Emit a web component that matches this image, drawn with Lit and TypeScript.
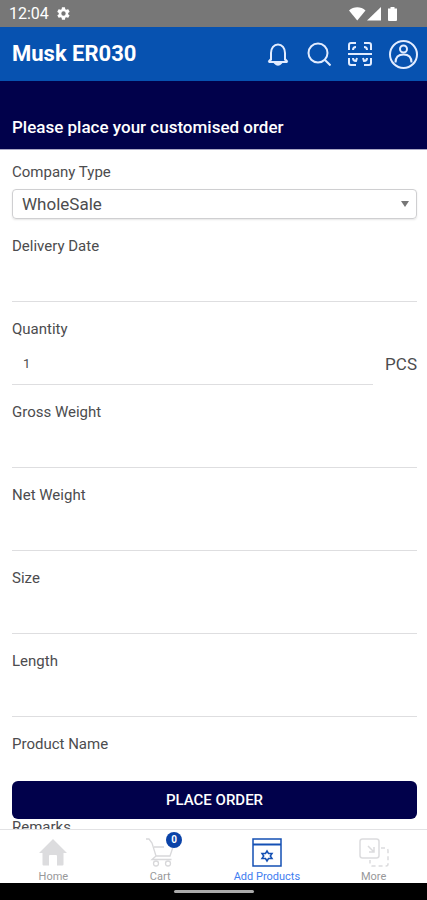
import { LitElement, html, css, svg, nothing } from "lit";
import { customElement, state } from "lit/decorators.js";
import { classMap } from "lit/directives/class-map.js";

interface Field {
  id: string;
  label: string;
  value?: string;
  unit?: string;
}

const FIELDS: Field[] = [
  { id: "delivery", label: "Delivery Date" },
  { id: "quantity", label: "Quantity", value: "1", unit: "PCS" },
  { id: "gross", label: "Gross Weight" },
  { id: "net", label: "Net Weight" },
  { id: "size", label: "Size" },
  { id: "length", label: "Length" },
  { id: "product", label: "Product Name" },
  { id: "remarks", label: "Remarks" },
];

const gear = html`<svg class="gear" viewBox="0 0 24 24" aria-hidden="true">
  <path fill="currentColor" fill-rule="evenodd" d="M19.4 13a7.800 7.800 0 0 0 0-2l2.100-1.600a.5.5 0 0 0 .1-.6l-2-3.500a.5.5 0 0 0-.6-.2l-2.500 1a7.300 7.300 0 0 0-1.700-1L14.400 2.400a.5.5 0 0 0-.5-.4h-4a.5.5 0 0 0-.5.4L9 5.100a7.700 7.700 0 0 0-1.700 1l-2.500-1a.5.5 0 0 0-.6.2l-2 3.500a.5.5 0 0 0 .1.600L4.500 11a7.800 7.800 0 0 0 0 2l-2.200 1.600a.5.5 0 0 0-.1.600l2 3.500c.1.2.4.3.6.2l2.500-1a7.300 7.300 0 0 0 1.700 1l.4 2.700c0 .2.2.4.5.4h4c.3 0 .5-.2.5-.4l.4-2.700a7.700 7.700 0 0 0 1.700-1l2.500 1c.2.1.5 0 .6-.2l2-3.500a.5.5 0 0 0-.1-.6zM12 15.500a3.500 3.500 0 1 1 0-7 3.500 3.500 0 0 1 0 7z"/>
</svg>`;

const signals = html`<svg class="signals" viewBox="0 0 50 16" aria-hidden="true">
  <g fill="currentColor">
    <path d="M0 4.500C4.500.2 12 .2 16.500 4.500L8.250 14.500z"/>
    <path d="M32 1v13.500H18z"/>
    <path d="M39 2.500h2.500V1h4v1.500H48V14q0 1-1 1h-7q-1 0-1-1z"/>
  </g>
</svg>`;

const bell = svg`<path d="M2.500 20h19M5 18.500V11C5 6 8 2.500 12 2.500s7 3.500 7 8.500v7.500M2.500 20L5 17M21.500 20L19 17"/><path d="M9 21q3 3.500 6 0z" fill="currentColor"/>`;
const search = svg`<circle cx="11" cy="11" r="9.500"/><path d="M18 18l5.500 5.500"/>`;
const scan = svg`<path d="M1 8V3q0-2 2-2h5M16 1h5q2 0 2 2v5M1 16v5q0 2 2 2h5M16 23h5q2 0 2-2v-5"/><path d="M5 8q0-3 3-3M16 5q3 0 3 3M5 16q0 3 3 3l1-3M19 16q0 3-3 3l-1-3"/><path d="M0 12h24"/>`;

const ACTIONS = [
  { name: "Notifications", art: bell },
  { name: "Search", art: search },
  { name: "Scan", art: scan },
];

const TABS = [
  {
    name: "Home",
    art: svg`<path d="M15 1L1 15h3.500v11.500q0 1 1 1H11V18q0-1 1-1h6q1 0 1 1v9.500h5.500q1 0 1-1V15H29z" fill="#dcdcde"/>`,
  },
  {
    name: "Cart",
    art: svg`<g fill="none" stroke="#d8d8da" stroke-width="1.300"><path d="M1 1h3l3 4 4 13h14l3-9M11 18l-4 3.500h19.500M9 9h10"/><circle cx="11" cy="25.500" r="2.500"/><circle cx="23" cy="25.500" r="2.500"/></g>`,
    badge: "0",
  },
  {
    name: "Add Products",
    art: svg`<g fill="none" stroke="#1450b4" stroke-width="1.500"><path d="M1 1h28v27H1z"/><path d="M1 6.500h28" stroke-width="2"/><path d="M15 13l1.500 2.500h3.500l-1.700 2.500 1.700 2.500h-3.500L15 23l-1.500-2.500H10l1.700-2.500-1.700-2.500h3.500z"/></g>`,
  },
  {
    name: "More",
    art: svg`<g fill="none" stroke="#dcdcde" stroke-width="1.500"><rect x="1" y="1" width="19" height="19" rx="2.500"/><path d="M9 8l6 6M15 9v5h-5"/><path d="M22 10h4q3 0 3 3v13q0 2-2 2H13q-2 0-2-2v-4" stroke-dasharray="4 3"/></g>`,
  },
];

@customElement("app-root")
export class AppRoot extends LitElement {
  @state() private active = "Add Products";

  static styles = css`
    :host {
      display: flex;
      flex-direction: column;
      height: 100vh;
      background: #fff;
      color: #4c4c4e;
      font-family: Roboto, "Liberation Sans", sans-serif;
      font-size: 15px;
      line-height: 20px;
    }
    * {
      box-sizing: border-box;
    }
    button,
    input,
    select {
      font: inherit;
      color: inherit;
      margin: 0;
      padding: 0;
      border: 0;
      background: none;
      border-radius: 0;
      outline: none;
    }
    svg {
      display: block;
    }
    .status {
      display: flex;
      align-items: center;
      gap: 7px;
      flex: none;
      height: 27px;
      padding: 0 28px 0 9px;
      background: #777;
      color: #fff;
      font-size: 16px;
    }
    .gear {
      width: 15px;
      height: 15px;
    }
    .signals {
      width: 50px;
      height: 16px;
      margin-left: auto;
    }
    .appbar {
      display: flex;
      align-items: center;
      justify-content: space-between;
      flex: none;
      height: 54px;
      padding: 0 9px 0 12px;
      background: #0752b0;
      color: #fff;
    }
    .title {
      margin: 0;
      font-size: 22px;
      line-height: 28px;
      font-weight: 700;
    }
    .actions {
      display: flex;
      align-items: center;
      gap: 17px;
    }
    .action {
      color: #e2ecff;
    }
    .action svg {
      width: 24px;
      height: 24px;
      fill: none;
      stroke: currentColor;
      stroke-width: 2;
    }
    .action .profile {
      width: 29px;
      height: 29px;
    }
    .banner {
      display: flex;
      align-items: flex-end;
      flex: none;
      height: 69px;
      padding: 0 12px 10px;
      background: #01014b;
      color: #fff;
      border-bottom: 1px solid #a9a7c4;
      font-size: 17px;
      font-weight: 500;
      line-height: 24px;
    }
    .heading {
      margin: 0;
      font: inherit;
    }
    .content {
      position: relative;
      flex: 1;
      min-height: 0;
      overflow: hidden;
    }
    .form {
      display: flex;
      flex-direction: column;
      gap: 17px;
      height: 100%;
      overflow: hidden;
      padding: 12px 10px 0 12px;
    }
    .field {
      display: flex;
      flex-direction: column;
      flex: none;
    }
    .pick {
      position: relative;
      margin-top: 7px;
    }
    .select {
      display: block;
      appearance: none;
      width: 100%;
      height: 30px;
      padding: 0 28px 0 9px;
      border: 1px solid #cfcfd1;
      border-radius: 4px;
      box-shadow: 0 1px 2px #0000001a;
      font-size: 17px;
    }
    .caret {
      position: absolute;
      right: 8px;
      top: 12px;
      border: 4px solid transparent;
      border-top: 6px solid #777;
      border-bottom: 0;
      pointer-events: none;
    }
    .entry {
      display: flex;
      align-items: center;
      gap: 12px;
      height: 46px;
    }
    .input {
      flex: 1;
      min-width: 0;
      height: 46px;
      padding: 4px 11px 0;
      border-bottom: 1px solid #dedee0;
      font-size: 13px;
    }
    .unit {
      padding-top: 4px;
      font-size: 17px;
    }
    .submit {
      position: absolute;
      left: 12px;
      right: 10px;
      bottom: 10px;
      height: 38px;
      border-radius: 6px;
      background: #01014b;
      color: #fff;
      font-size: 15px;
      font-weight: 500;
      text-align: center;
    }
    .tabs {
      display: flex;
      flex: none;
      height: 54px;
      border-top: 1px solid #e2e2e4;
    }
    .tab {
      display: flex;
      flex: 1;
      flex-direction: column;
      align-items: center;
      gap: 3px;
      padding-top: 8px;
      color: #98989a;
      font-size: 11px;
      line-height: 14px;
      white-space: nowrap;
    }
    .tab.on {
      color: #3f7df0;
    }
    .glyph {
      position: relative;
    }
    .glyph svg {
      width: 30px;
      height: 29px;
    }
    .badge {
      position: absolute;
      top: -6px;
      right: -7px;
      width: 16px;
      height: 16px;
      border-radius: 50%;
      background: #0b43a8;
      color: #fff;
      font-size: 10px;
      line-height: 16px;
      font-weight: 700;
    }
    .system {
      display: flex;
      align-items: center;
      justify-content: center;
      flex: none;
      height: 17px;
      background: #000;
    }
    .handle {
      width: 80px;
      height: 3px;
      border-radius: 2px;
      background: #aaa;
    }
  `;

  private field(f: Field) {
    return html`<div class="field">
      <label for=${f.id}>${f.label}</label>
      <div class="entry">
        <input class="input" id=${f.id} type="text" .value=${f.value ?? ""} />
        ${f.unit ? html`<span class="unit">${f.unit}</span>` : nothing}
      </div>
    </div>`;
  }

  render() {
    return html`
      <div class="status"><span>12:04</span>${gear}${signals}</div>
      <header class="appbar">
        <h1 class="title">Musk ER030</h1>
        <div class="actions">
          ${ACTIONS.map(
            (a) => html`<button class="action" type="button" aria-label=${a.name}>
              <svg viewBox="0 0 24 24">${a.art}</svg>
            </button>`
          )}
          <button class="action" type="button" aria-label="Profile">
            <svg class="profile" viewBox="0 0 29 29">
              <circle cx="14.500" cy="14.500" r="13.500" />
              <circle cx="14.500" cy="9" r="3.500" />
              <path d="M6.500 22.500c0-5.500 3-8 8-8s8 2.500 8 8" />
            </svg>
          </button>
        </div>
      </header>
      <div class="banner"><h2 class="heading">Please place your customised order</h2></div>
      <main class="content">
        <form class="form" id="order">
          <div class="field">
            <label for="company">Company Type</label>
            <div class="pick">
              <select class="select" id="company">
                <option>WholeSale</option>
              </select>
              <span class="caret"></span>
            </div>
          </div>
          ${FIELDS.map((f) => this.field(f))}
        </form>
        <button class="submit" type="button">PLACE ORDER</button>
      </main>
      <nav class="tabs">
        ${TABS.map(
          (t) => html`<button
            type="button"
            class=${classMap({ tab: true, on: t.name === this.active })}
            @click=${() => (this.active = t.name)}
          >
            <span class="glyph">
              <svg viewBox="0 0 30 29" aria-hidden="true">${t.art}</svg>
              ${t.badge ? html`<span class="badge">${t.badge}</span>` : nothing}
            </span>
            <span>${t.name}</span>
          </button>`
        )}
      </nav>
      <div class="system"><div class="handle"></div></div>
    `;
  }
}
